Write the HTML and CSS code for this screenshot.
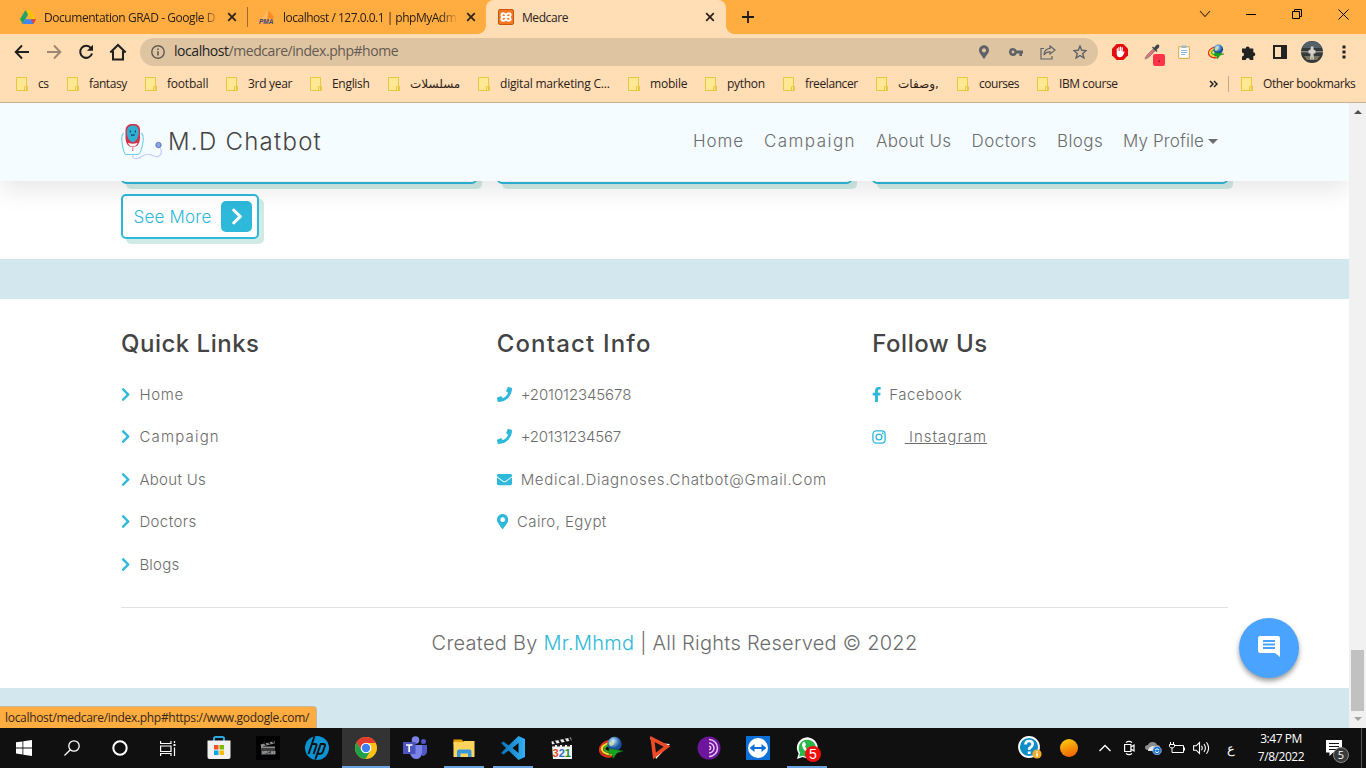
FILE: index.html
```html
<!DOCTYPE html>
<html lang="en">
<head>
<meta charset="utf-8">
<title>Medcare</title>
<link rel="stylesheet" href="styles.css">
</head>
<body>
<svg class="defs" width="0" height="0">
  <defs>
    <symbol id="chev" viewBox="0 0 320 512"><path d="M285.476 272.971L91.132 467.314c-9.373 9.373-24.569 9.373-33.941 0l-22.667-22.667c-9.357-9.357-9.375-24.522-.04-33.901L188.505 256 34.484 101.255c-9.335-9.379-9.317-24.544.04-33.901l22.667-22.667c9.373-9.373 24.569-9.373 33.941 0L285.475 239.03c9.373 9.372 9.373 24.568.001 33.941z"/></symbol>
    <symbol id="phone" viewBox="0 0 512 512"><path d="M493.4 24.6l-104-24c-11.3-2.6-22.9 3.3-27.5 13.9l-48 112c-4.2 9.8-1.4 21.3 6.9 28l60.6 49.6c-36 76.7-98.9 140.5-177.2 177.2l-49.6-60.6c-6.8-8.3-18.2-11.1-28-6.9l-112 48C3.9 366.5-2 378.1.6 389.4l24 104C27.1 504.2 36.7 512 48 512c256.1 0 464-207.5 464-464 0-11.2-7.7-20.9-18.6-23.4z"/></symbol>
    <symbol id="mail" viewBox="0 0 512 512"><path d="M502.3 190.8c3.9-3.1 9.7-.2 9.7 4.7V400c0 26.5-21.5 48-48 48H48c-26.5 0-48-21.5-48-48V195.6c0-5 5.7-7.8 9.7-4.7 22.4 17.4 52.1 39.5 154.1 113.6 21.1 15.4 56.7 47.8 92.2 47.6 35.7.3 72-32.8 92.3-47.6 102-74.1 131.6-96.3 154-113.7zM256 320c23.2.4 56.6-29.2 73.4-41.4 132.7-96.3 142.8-104.7 173.4-128.7 5.8-4.5 9.2-11.5 9.2-18.9v-19c0-26.5-21.5-48-48-48H48c-26.5 0-48 21.5-48 48v19c0 7.4 3.4 14.3 9.2 18.9 30.6 23.9 40.7 32.4 173.4 128.7 16.8 12.2 50.2 41.8 73.4 41.4z"/></symbol>
    <symbol id="pin" viewBox="0 0 384 512"><path d="M172.268 501.67C26.97 291.031 0 269.413 0 192 0 85.961 85.961 0 192 0s192 85.961 192 192c0 77.413-26.97 99.031-172.268 309.67-9.535 13.774-29.93 13.773-39.464 0zM192 272c44.183 0 80-35.817 80-80s-35.817-80-80-80-80 35.817-80 80 35.817 80 80 80z"/></symbol>
    <symbol id="fb" viewBox="0 0 320 512"><path d="M279.14 288l14.22-92.66h-88.91v-60.13c0-25.35 12.42-50.06 52.24-50.06h40.42V6.26S260.43 0 225.36 0c-73.22 0-121.08 44.38-121.08 124.72v70.62H22.89V288h81.39v224h100.17V288z"/></symbol>
    <symbol id="insta" viewBox="0 0 14 14"><g fill="none" stroke="currentColor" stroke-width="1.3"><rect x=".9" y=".9" width="12.2" height="12.2" rx="3.4"/><circle cx="7" cy="7" r="2.9"/></g><circle cx="10.7" cy="3.4" r=".9"/></symbol>
    <symbol id="folder" viewBox="0 0 12 14"><path d="M.5.5h10v9h1v4H.5z" fill="#ffe893" stroke="#e8c63f"/><path d="M8.5 13.5V10q0-.5.5-.5h1.5v4" fill="none" stroke="#e8c63f"/></symbol>
    <symbol id="x" viewBox="0 0 10 10"><path d="M1.2 1.2l7.6 7.600M8.8 1.2L1.2 8.8" fill="none" stroke="#2b2118" stroke-width="1.7"/></symbol>
    <linearGradient id="vs" x1="0" x2="1"><stop offset="0" stop-color="#0a72b8"/><stop offset="1" stop-color="#33b1f3"/></linearGradient>
    <linearGradient id="sun" x1="0" y1="0" x2="0.3" y2="1"><stop offset="0" stop-color="#ffd20a"/><stop offset="1" stop-color="#f06a05"/></linearGradient>
    <radialGradient id="globe" cx=".4" cy=".3"><stop offset="0" stop-color="#e8f4fb"/><stop offset=".45" stop-color="#6aa9d8"/><stop offset="1" stop-color="#1c4f9c"/></radialGradient>
    <symbol id="idm" viewBox="0 0 24 24"><path d="M12 4.500C4 5.500 0 11 1 15c1 4 7 7 12 5" fill="none" stroke="#e2321e" stroke-width="2"/><path d="M12 6.500C6 7.500 2 11 3 14c1 3 6 5 11 4" fill="none" stroke="#ffd52a" stroke-width="2.2"/><path d="M12 8.500C8 9.500 4.500 11 5.500 13.500c1 2 5 3 8 2.500" fill="none" stroke="#3fae2a" stroke-width="2"/><circle cx="15.500" cy="8" r="7.200" fill="url(#globe)"/><path d="M10 7c2-3 5-2 5 0s-2 3-4 3z" fill="#cfd9a8"/><path d="M10 12.500l14 2.500-6 2-4 5.500-1-5-3 1z" fill="#18a51f" stroke="#0b6b12" stroke-width=".5"/></symbol>
  </defs>
</svg>

<div class="tabstrip">
  <div class="tab tab-a">
    <svg width="16" height="14" viewBox="0 0 16 14"><path d="M5.5 0h5L16 9.3h-5z" fill="#ffc107"/><path d="M5.5 0L8 4.4 2.7 14 0 9.3z" fill="#1fa463"/><path d="M5.300 9.300H16L13.3 14H2.7z" fill="#4285f4"/><path d="M16 9.3L13.300 14 10.7 9.3z" fill="#ea4335"/></svg>
    <span class="tab-title fade">Documentation GRAD - Google D</span>
    <svg width="10" height="10"><use href="#x"/></svg>
  </div>
  <div class="tab tab-b">
    <svg width="17" height="16" viewBox="0 0 17 16"><path d="M2 9.500Q6 7 8 1q2 5 0 8.500z" fill="#ffb968"/><path d="M8 9.500Q10 6 9 2q5 3 6 7.500z" fill="#ff8a1c"/><text x="0" y="15.2" class="pma">PMA</text></svg>
    <span class="tab-title fade">localhost / 127.0.0.1 | phpMyAdm</span>
    <svg width="10" height="10"><use href="#x"/></svg>
  </div>
  <div class="tab tab-c">
    <svg width="16" height="16" viewBox="0 0 16 16"><rect x=".5" y=".5" width="15" height="15" rx="1.5" fill="#f37623" stroke="#c9560c"/><path d="M5.200 4.200Q7 4.200 8 6.200 9 4.200 10.800 4.200 12.800 4.200 12.600 6.200 12.300 7.300 11 8q1.500.700 1.600 2 0 1.800-1.800 1.800Q9 11.800 8 10q-1 1.800-2.800 1.800-1.800 0-1.800-1.800 0-1.300 1.600-2-1.500-.700-1.600-1.800.2-2 1.800-2zM6 8h4" fill="none" stroke="#fff" stroke-width="2"/></svg>
    <span class="tab-title">Medcare</span>
    <svg width="10" height="10"><use href="#x"/></svg>
  </div>
  <svg class="plus" width="12" height="12" viewBox="0 0 12 12"><path d="M6 0v12M0 6h12" stroke="#1f1a14" stroke-width="1.8"/></svg>
  <div class="winbtns">
    <svg width="12" height="8" viewBox="0 0 12 8"><path d="M1 1l5 5.500L11 1" fill="none" stroke="#3a2a14" stroke-width="1.1"/></svg>
    <svg width="10" height="10" viewBox="0 0 10 10"><path d="M0 5.500h10" stroke="#000"/></svg>
    <svg width="10" height="10" viewBox="0 0 10 10"><path d="M.5 2.500h7v7h-7zM2.500 2.500v-2h7v7h-2" fill="none" stroke="#000"/></svg>
    <svg width="11" height="11" viewBox="0 0 11 11"><path d="M.5.5l10 10M10.5.5l-10 10" stroke="#000"/></svg>
  </div>
</div>

<div class="toolbar">
  <svg width="16" height="16" viewBox="0 0 16 16"><path d="M15 8H2M8 1.500L1.700 8 8 14.500" fill="none" stroke="#1f1f1f" stroke-width="1.9"/></svg>
  <svg width="16" height="16" viewBox="0 0 16 16"><path d="M1 8h13M8 1.500L14.300 8 8 14.500" fill="none" stroke="#9b8772" stroke-width="1.9"/></svg>
  <svg width="16" height="16" viewBox="0 0 16 16"><path d="M13 4.200A6 6 0 1 0 14 9.500" fill="none" stroke="#1f1f1f" stroke-width="2"/><path d="M15 .8v6H9z" fill="#1f1f1f"/></svg>
  <svg width="18" height="18" viewBox="0 0 18 18"><path d="M1.300 9.500L9 2l7.700 7.500M4 8v8.500h10V8" fill="none" stroke="#1f1f1f" stroke-width="2"/></svg>
  <div class="omnibox">
    <svg width="14" height="14" viewBox="0 0 14 14"><circle cx="7" cy="7" r="6.200" fill="none" stroke="#5f5a54" stroke-width="1.4"/><path d="M7 6.200v4.300M7 3.400v1.600" stroke="#5f5a54" stroke-width="1.6"/></svg>
    <span class="url"><b>localhost</b>/medcare/index.php#home</span>
    <svg class="loc" width="10" height="14"><use href="#pin"/></svg>
    <svg width="14" height="8" viewBox="0 0 14 8"><path d="M4 0a4 4 0 0 1 3.700 2.600H14v2.800h-1V8h-2.600V5.400H7.700A4 4 0 1 1 4 0zM4 2.600a1.400 1.400 0 1 0 0 2.800 1.400 1.400 0 0 0 0-2.800z" fill="#5f6368" fill-rule="evenodd"/></svg>
    <svg width="16" height="15" viewBox="0 0 16 15"><path d="M4 3.500H1v10.500h11v-3" fill="none" stroke="#5f6368" stroke-width="1.2"/><path d="M10 1l5 4-5 4V6.800Q6 6.500 4 10 4.200 4 10 3.400z" fill="none" stroke="#5f6368" stroke-width="1.2"/></svg>
    <svg width="14" height="14" viewBox="0 0 14 14"><path d="M7 1l1.700 4.300 4.500.3-3.500 2.900 1.200 4.500L7 10.500 3.100 13l1.200-4.500L.8 5.600l4.500-.3z" fill="none" stroke="#5f6368" stroke-width="1.4"/></svg>
  </div>
  <div class="exts">
    <svg width="16" height="16" viewBox="0 0 16 16"><path d="M4.700 0h6.600L16 4.700v6.600L11.300 16H4.700L0 11.300V4.700z" fill="#e40d0d"/><path d="M4.700 8V4.600q.7-.8 1.200 0V7h.4V3.300q.6-.8 1.200 0V7H8V2.900q.6-.8 1.200 0V7h.4V3.600q.6-.8 1.200 0v5l.8-1.200q.9-.4 1 .3L11 11.500Q9.900 13.200 8 13.200 4.700 13 4.700 9.500z" fill="#fff"/></svg>
    <span class="picker"><svg width="16" height="16" viewBox="0 0 16 16"><path d="M1 15l1.500-3.500L9 5l2 2-6.500 6.500z" fill="#e0707c" stroke="#9c8583"/><path d="M8 3.500L12.500 8l1-1L12.400 6 15 3.500Q16 1 14.500.5T12 1.500L10 3.800 9 2.500z" fill="#40444c"/></svg><i>.</i></span>
    <svg width="12" height="14" viewBox="0 0 12 14"><rect x=".6" y="1.600" width="10.800" height="11.800" rx="1" fill="#fff" stroke="#e3b155" stroke-width="1.2"/><path d="M3.500.5h5v2.500h-5z" fill="#9fb9c9"/><path d="M3 5.500h6M3 7.500h6M3 9.500h4" stroke="#86b3da"/></svg>
    <svg width="16" height="16"><use href="#idm"/></svg>
    <svg width="15" height="15" viewBox="0 0 15 15"><path d="M1 3.500h3.700a2 2 0 1 1 4 0H12.300v3.700a2 2 0 1 1 0 4V15H8.800a2 2 0 0 0-4 0H1v-3.600a2 2 0 0 0 0-4z" fill="#222"/></svg>
    <svg width="14" height="14" viewBox="0 0 14 14"><path d="M0 0h14v14H0zM2 2v10h6V2z" fill="#222" fill-rule="evenodd"/></svg>
    <svg width="22" height="22" viewBox="0 0 22 22"><circle cx="11" cy="11" r="11" fill="#34393c"/><path d="M1 7Q3 2 8 .5h6Q19 2 21 7z" fill="#53616b"/><path d="M0 10h22v1.500H0z" fill="#87867a"/><path d="M3 15h16l-3 4H6z" fill="#7d7460"/><path d="M10 5.500h2.500v3l2 1v3h-2l.5 6h-1.500l-.5-5-.5 5H9l.5-6h-2v-3l2-1z" fill="#d9d2cb"/></svg>
    <svg width="4" height="14" viewBox="0 0 4 14"><path d="M.5.5h3v3h-3zM.5 5.500h3v3h-3zM.5 10.500h3v3h-3z" fill="#222"/></svg>
  </div>
</div>

<div class="bookmarks">
  <span class="bm"><svg width="12" height="14"><use href="#folder"/></svg><span class="m5">cs</span></span>
  <span class="bm"><svg width="12" height="14"><use href="#folder"/></svg><span class="m4">fantasy</span></span>
  <span class="bm"><svg width="12" height="14"><use href="#folder"/></svg><span class="m2">football</span></span>
  <span class="bm"><svg width="12" height="14"><use href="#folder"/></svg><span class="m3">3rd year</span></span>
  <span class="bm"><svg width="12" height="14"><use href="#folder"/></svg><span class="m3">English</span></span>
  <span class="bm"><svg width="12" height="14"><use href="#folder"/></svg><span class="ar">مسلسلات</span></span>
  <span class="bm"><svg width="12" height="14"><use href="#folder"/></svg><span class="m2">digital marketing C...</span></span>
  <span class="bm"><svg width="12" height="14"><use href="#folder"/></svg><span class="m2">mobile</span></span>
  <span class="bm"><svg width="12" height="14"><use href="#folder"/></svg><span class="m3">python</span></span>
  <span class="bm"><svg width="12" height="14"><use href="#folder"/></svg><span class="m4">freelancer</span></span>
  <span class="bm"><svg width="12" height="14"><use href="#folder"/></svg><span class="ar">وصفات,</span></span>
  <span class="bm"><svg width="12" height="14"><use href="#folder"/></svg><span class="m5">courses</span></span>
  <span class="bm"><svg width="12" height="14"><use href="#folder"/></svg><span class="m4">IBM course</span></span>
  <svg width="9" height="8" viewBox="0 0 9 8"><path d="M1 1l3 3-3 3M5 1l3 3-3 3" fill="none" stroke="#222" stroke-width="1.5"/></svg>
  <span class="bm-sep"></span>
  <span class="bm"><svg width="12" height="14"><use href="#folder"/></svg><span class="m4">Other bookmarks</span></span>
</div>

<div class="view">
  <div class="page">
    <header class="header">
      <a class="brand">
        <svg width="41" height="36" viewBox="0 0 41 36"><path d="M2.500 9Q0 12 1 18q1.500 12 4 12.500h12q3-.5 5-12.500 1-6-1.500-9" fill="none" stroke="#74cfe2" stroke-width="1.200"/><path d="M12 31q-1 4 4 3.500 3-.3 6-2.700 4-2.500 8-1 8 4.500 10-1 1-4-1-6" fill="none" stroke="#c3cdf6" stroke-width="1.200"/><path d="M11 0h2q5.500 0 6 5.500v9q-.5 8.500-7.200 8.500T4.500 14.500v-9Q5.500 0 11 0z" fill="#d5304a"/><path d="M11 1.500h2q4.500.5 4.800 6 .2 8.500-6 11-6.200-2.500-6-11 .3-5.500 5.200-6z" fill="#2fafd2"/><path d="M7 18.800q4.800 2 9.600 0-1 3.700-4.800 3.700T7 18.800z" fill="#fff"/><path d="M11.800 23v4" stroke="#ef9b9b" stroke-width="1.500"/><path d="M9.300 6.500v2M14.400 6.500v2M10 10.500q1.800 1.500 3.600 0" stroke="#173a59" stroke-width="1.100" fill="none"/><circle cx="37.500" cy="21" r="2.700" fill="#86a7e8" stroke="#56659d" stroke-width=".8"/></svg>
        <span>M.D Chatbot</span>
      </a>
      <nav class="nav">
        <a class="w9">Home</a><a class="w14">Campaign</a><a class="w3">About Us</a><a class="w5">Doctors</a><a class="w4">Blogs</a><a class="w1">My Profile<i class="caret"></i></a>
      </nav>
    </header>
    <section class="blog">
      <div class="cards"><div class="card"></div><div class="card"></div><div class="card"></div></div>
      <a class="more"><span class="w2">See More</span><i><svg width="12" height="19"><use href="#chev"/></svg></i></a>
    </section>
    <section class="footer">
      <div class="cols">
        <div class="col">
          <h3 class="w5">Quick Links</h3>
          <a><svg width="9.4" height="15"><use href="#chev"/></svg><span class="w7">Home</span></a>
          <a><svg width="9.4" height="15"><use href="#chev"/></svg><span class="w12">Campaign</span></a>
          <a><svg width="9.4" height="15"><use href="#chev"/></svg><span class="w3">About Us</span></a>
          <a><svg width="9.4" height="15"><use href="#chev"/></svg><span class="w4">Doctors</span></a>
          <a><svg width="9.4" height="15"><use href="#chev"/></svg><span class="w2">Blogs</span></a>
        </div>
        <div class="col">
          <h3 class="w12">Contact Info</h3>
          <a><svg width="15" height="15"><use href="#phone"/></svg><span class="m1">+201012345678</span></a>
          <a><svg width="15" height="15"><use href="#phone"/></svg><span class="m2">+20131234567</span></a>
          <a><svg width="15" height="15"><use href="#mail"/></svg><span class="w7">Medical.Diagnoses.Chatbot@Gmail.Com</span></a>
          <a><svg width="11.3" height="15"><use href="#pin"/></svg><span class="w4">Cairo, Egypt</span></a>
        </div>
        <div class="col">
          <h3 class="w5">Follow Us</h3>
          <a class="fbl"><svg width="9.4" height="15"><use href="#fb"/></svg><span class="w6">Facebook</span></a>
          <a class="ig"><svg width="14" height="14"><use href="#insta"/></svg><u>&nbsp;<span class="w10">Instagram</span></u></a>
        </div>
      </div>
      <div class="credit">Created By <em>Mr.Mhmd</em> | All Rights Reserved © 2022</div>
    </section>
    <div class="chat"><svg width="22" height="22" viewBox="0 0 22 22"><path d="M2 0h18q2 0 2 2v19l-5-4H2q-2 0-2-2V2Q0 0 2 0zM5 4v2h12V4zM5 7.500v2h12v-2zM5 11v2h12v-2z" fill="#fff" fill-rule="evenodd"/></svg></div>
    <div class="status">localhost/medcare/index.php#https://www.godogle.com/</div>
  </div>
  <div class="scroll"><i class="up"></i><i class="thumb"></i><i class="down"></i></div>
</div>

<div class="taskbar">
  <div class="sys">
    <svg width="16" height="16" viewBox="0 0 16 16"><path d="M0 2.300l6.500-.9v6.100H0zM7.300 1.300L16 0v7.500H7.300zM0 8.400h6.500v6.100L0 13.600zM7.300 8.400H16V16l-8.700-1.300z" fill="#fff"/></svg>
    <svg width="16" height="16" viewBox="0 0 16 16"><circle cx="10" cy="6" r="5.200" fill="none" stroke="#fff" stroke-width="1.3"/><path d="M6.300 9.700L.5 15.500" stroke="#fff" stroke-width="1.3"/></svg>
    <svg width="16" height="16" viewBox="0 0 16 16"><circle cx="8" cy="8" r="6.700" fill="none" stroke="#fff" stroke-width="2"/></svg>
    <svg width="16" height="15" viewBox="0 0 16 15"><path d="M.6 0v2.500h10.400V0M.6 5h10.400v5.500H.6zM.6 15v-2.500h10.400V15M14.500 0v2M14.500 6.500V15" fill="none" stroke="#fff" stroke-width="1.2"/><path d="M13.500 3h2v2h-2z" fill="#fff"/></svg>
  </div>
  <div class="apps">
    <div><svg width="24" height="24" viewBox="0 0 24 24"><path d="M7 5V2.500Q7 1 8.500 1h7Q17 1 17 2.500V5" fill="none" stroke="#2aa8e0" stroke-width="2"/><path d="M.5 4.500h23V21q0 2-2 2h-19q-2 0-2-2z" fill="#f1f1f1"/><path d="M7 9h4.500v4.500H7z" fill="#f25022"/><path d="M12.500 9H17v4.500h-4.500z" fill="#7fba00"/><path d="M7 14.500h4.500V19H7z" fill="#00a4ef"/><path d="M12.500 14.500H17V19h-4.500z" fill="#ffb900"/></svg></div>
    <div><svg width="24" height="24" viewBox="0 0 24 24"><path d="M0 0h24v24H0z" fill="#000"/><path d="M5 12h14v7H5z" fill="#3c3c3c"/><path d="M4.500 8.500l14-3.500.6 2.300-14 3.500zM5 10.500h14V12H5z" fill="#8e8e8e"/><path d="M8 6l2 3M12 5.500l2 2.500M16 4.500l2 2.500" stroke="#111" stroke-width="1.5"/><text x="6" y="17.8" class="mpc">MPC-BE</text></svg></div>
    <div><svg width="24" height="24" viewBox="0 0 24 24"><circle cx="12" cy="12" r="12" fill="#0b93d2"/><path d="M9.500.3L3.500 18M7 8h3q2 0 1.400 1.700L8.600 18M15.700 8L10.300 23.500M15 8h3.500q2 0 1.400 1.700l-2 6q-.7 2-2.400 2H13" fill="none" stroke="#111" stroke-width="1.9"/></svg></div>
    <div class="active"><svg width="24" height="24" viewBox="0 0 24 24"><circle cx="12" cy="12" r="11" fill="#fbc116"/><path d="M12 7h9.800A11 11 0 0 0 2.500 6.500L7.700 14.500z" fill="#e33b2e"/><path d="M2.500 6.500A11 11 0 0 0 11.500 23l5-8.500H7.700z" fill="#1fa04a"/><circle cx="12" cy="12" r="5.300" fill="#fff"/><circle cx="12" cy="12" r="4.200" fill="#3c7ff0"/></svg></div>
    <div><svg width="24" height="24" viewBox="0 0 24 24"><circle cx="20.500" cy="5.500" r="2.500" fill="#5059c9"/><path d="M16 9h8v7q-1 4-5 4z" fill="#5059c9"/><circle cx="12.500" cy="4" r="3.800" fill="#7b83eb"/><path d="M8 9h11v8q-1 6-6 6-5-.5-6-6z" fill="#7b83eb"/><path d="M0 6h12.500v12H0z" fill="#4b53bc"/><path d="M3 9h6.500M6.200 9v7" stroke="#fff" stroke-width="1.7"/></svg></div>
    <div class="open"><svg width="22" height="20" viewBox="0 0 22 20"><path d="M.5 1.500h8l2 2v3h-10z" fill="#e8a100"/><path d="M.5 4L10 4l1-1h10.500v16H.5z" fill="#ffd45c"/><path d="M4 19v-5.500q0-2 2-2h10.500q2 0 2 2V19h-3.500v-3.500h-7.500V19z" fill="#3a96dd"/></svg></div>
    <div class="open"><svg width="24" height="24" viewBox="0 0 24 24"><path d="M17.500 0L24 3v18l-6.500 3L7.500 14.500 2.500 18.500 0 17l5-5-5-5 2.500-1.500 5 4zM17.500 7L11.500 12l6 5z" fill="url(#vs)" fill-rule="evenodd"/></svg></div>
    <div><svg width="22" height="24" viewBox="0 0 22 24"><path d="M1 9h20v14H2z" fill="#f4f4f4"/><path d="M.5 5.500L20 1.500l.5 3L1 8.500z" fill="#eee"/><path d="M3 5l2 3M8 4l2 3M13 3l2 3M18 2l1.500 3" stroke="#111" stroke-width="2"/><path d="M1 9.500h20" stroke="#222" stroke-dasharray="3 2" stroke-width="2"/><text x="1.500" y="20.500" class="clap"><tspan fill="#d84d1b">3</tspan><tspan fill="#2b6fc4">2</tspan><tspan fill="#258b2e">1</tspan></text></svg></div>
    <div><svg width="24" height="24"><use href="#idm"/></svg></div>
    <div><svg width="22" height="24" viewBox="0 0 22 24"><path d="M1 1l6 6 14 1-14 15z" fill="#fff"/><path d="M3.500 3L18 10.500 5.500 20z" fill="#151515" stroke="#ee4a25" stroke-width="3.6"/></svg></div>
    <div><svg width="24" height="24" viewBox="0 0 24 24"><circle cx="12" cy="12" r="11.500" fill="#6d169b"/><path d="M12 3.500a8.500 8.500 0 0 1 0 17M12 7a5 5 0 0 1 0 10M12 10.300a1.700 1.700 0 0 1 0 3.400" fill="none" stroke="#e6c6f5" stroke-width="1.5"/></svg></div>
    <div><svg width="24" height="24" viewBox="0 0 24 24"><path d="M0 0h24v24H0z" fill="#0d6fd8"/><circle cx="12" cy="12" r="10" fill="#fff"/><path d="M3.500 12l5-4v3h7V8l5 4-5 4v-3h-7v3z" fill="#0d6fd8"/></svg></div>
    <div class="open wa"><svg width="24" height="24" viewBox="0 0 24 24"><path d="M2 23l1.600-5.500A10.400 10.400 0 1 1 7.500 21z" fill="#fff"/><path d="M4 20.700l1-3.900a8.600 8.600 0 1 1 3 2.900z" fill="#2ab74a"/><path d="M8.500 6l1.500.3 1 2.700-1 1.500q1 2.500 4 3.800l1.500-1.600 2.500 1.200q0 3-3 3Q8 16 7 9q0-2 1.500-3z" fill="#fff"/></svg><b>5</b></div>
  </div>
  <div class="tray">
    <svg width="24" height="24" viewBox="0 0 24 24"><circle cx="11" cy="11" r="10" fill="#0f8fc9" stroke="#fff" stroke-width="1.8"/><path d="M7.500 8.500Q7.500 5 11 5t3.700 3q0 2-3.500 4.500v1.500" fill="none" stroke="#fff" stroke-width="2.6"/><path d="M9.800 15.500h2.800v2.500H9.800z" fill="#fff"/><circle cx="19" cy="18" r="4.600" fill="#f3ab2b"/><path d="M19 15.200v1.300M19 17.300v3.500" stroke="#fff" stroke-width="1.4"/></svg>
    <svg width="18" height="18" viewBox="0 0 18 18"><circle cx="9" cy="9" r="9" fill="url(#sun)"/></svg>
    <svg width="12" height="8" viewBox="0 0 12 8"><path d="M.5 7L6 1.500 11.500 7" fill="none" stroke="#fff" stroke-width="1.3"/></svg>
    <svg width="12" height="16" viewBox="0 0 12 16"><path d="M1.600 4.500h6.300v7H1.600zM8 7l3-2v6L8 9M3 2.500Q6 .2 9 2.500M3 13.500q3 2.300 6 0" fill="none" stroke="#fff" stroke-width="1.2"/></svg>
    <svg width="17" height="14" viewBox="0 0 17 14"><path d="M3 9Q0 9 0 6.500T3 4Q4 1 7.500 1T12 4q3 0 3 3v2z" fill="#8c8c8c"/><path d="M3 10q0-4 5-5l5 2v3z" fill="#e8e8e8"/><circle cx="12" cy="9.500" r="4.300" fill="#1c74d0" stroke="#dceaf8" stroke-width=".6"/><path d="M10 9q2-2.500 4 0M14 10.500q-2 2.500-4 0" stroke="#fff" fill="none"/></svg>
    <svg width="16" height="12" viewBox="0 0 16 12"><path d="M5 3.500h9.500v7H4M15.500 5.500v3M1.500 0v2M4.500 0v2M.5 2.500h5v2q-.5 1.500-2.500 1.500T.5 4.500zM3 6v4.500h2" fill="none" stroke="#fff"/></svg>
    <svg width="17" height="14" viewBox="0 0 17 14"><path d="M.6 4.800h2.600L6.500 1.500v11L3.200 9.200H.6z" fill="none" stroke="#fff" stroke-width="1.1"/><path d="M8.500 4.800q1.500 2.200 0 4.400M11 3q2.800 4 0 8M13.500 1.200q4.200 5.800 0 11.600" fill="none" stroke="#fff" stroke-width="1.1"/></svg>
    <span class="lang">ع</span>
    <span class="clock">3:47 PM<br>7/8/2022</span>
    <span class="note"><svg width="16" height="16" viewBox="0 0 16 16"><path d="M0 0h16v12.500H7L3.500 16v-3.500H0z" fill="#fff"/><path d="M3 3.500h10M3 6.500h10M3 9.500h7" stroke="#111" stroke-width="1.2"/></svg><b>5</b></span>
    <i class="peek"></i>
  </div>
</div>
</body>
</html>
```

FILE: styles.css
```css
* { box-sizing: border-box; }
body { margin: 0; width: 1366px; height: 768px; overflow: hidden; display: flex; flex-direction: column; font-family: "Open Sans", "Noto Sans", sans-serif; font-size: 12px; color: #2b2118; }
svg { display: block; flex: none; }
.defs { position: absolute; }
i { font-style: normal; }

/* letter-spacing steps: w = wider, m = tighter */
.m5 { letter-spacing: -.48px; }
.m4 { letter-spacing: -.41px; }
.m3 { letter-spacing: -.3px; }
.m2 { letter-spacing: -.2px; }
.m1 { letter-spacing: -.1px; }
.w1 { letter-spacing: .12px; }
.w2 { letter-spacing: .21px; }
.w3 { letter-spacing: .3px; }
.w4 { letter-spacing: .4px; }
.w5 { letter-spacing: .5px; }
.w6 { letter-spacing: .56px; }
.w7 { letter-spacing: .7px; }
.w9 { letter-spacing: .91px; }
.w10 { letter-spacing: 1px; }
.w12 { letter-spacing: 1.18px; }
.w14 { letter-spacing: 1.44px; }

.tabstrip { height: 34px; background: #ffac41; display: flex; align-items: center; flex: none; }
.tab { display: flex; align-items: center; height: 34px; position: relative; }
.tab-a { width: 248px; padding-left: 20px; }
.tab-a::after { content: ""; width: 1px; height: 20px; background: #9b6c30; margin-left: 10px; }
.tab-b { width: 238px; padding-left: 11px; }
.tab-c { width: 240px; padding-left: 12px; background: #ffddb5; border-radius: 8px 8px 0 0; letter-spacing: -.42px; }
.tab-c::before, .tab-c::after { content: ""; position: absolute; bottom: 0; width: 8px; height: 8px; }
.tab-c::before { left: -8px; background: radial-gradient(circle at 0 0, #ffac41 7.5px, #ffddb5 8px); }
.tab-c::after { right: -8px; background: radial-gradient(circle at 100% 0, #ffac41 7.5px, #ffddb5 8px); }
.tab-title { white-space: nowrap; margin-left: 8px; }
.tab-a .tab-title { width: 176px; margin-right: 7px; letter-spacing: -.45px; }
.tab-b .tab-title { width: 175px; margin-right: 8px; margin-left: 7px; letter-spacing: -.5px; }
.tab-c .tab-title { margin-right: auto; }
.tab-c > svg:last-child { margin-right: 11px; }
.fade { -webkit-mask-image: linear-gradient(90deg, #000 90%, transparent); mask-image: linear-gradient(90deg, #000 90%, transparent); }
.pma { font: italic bold 6.5px "Liberation Sans", sans-serif; fill: #3b4580; letter-spacing: 0; }
.plus { margin-left: 16px; }
.winbtns { margin-left: auto; display: grid; grid-template-columns: repeat(4, 46px); justify-items: center; align-items: center; height: 28px; margin-bottom: 6px; }

.toolbar { height: 36px; background: #ffddb5; flex: none; display: flex; align-items: center; padding-left: 14px; gap: 16px; }
.toolbar > svg:nth-child(4) { margin-left: -1px; }
.omnibox { width: 958px; height: 28px; border-radius: 14px; background: #dfc4a2; margin-left: -3px; padding: 0 11px; display: flex; align-items: center; }
.url { font-size: 14px; line-height: 20px; margin: -2px 0 0 9px; flex: 1; color: #625a50; letter-spacing: -.45px; }
.url b { font-weight: 400; color: #222; }
.loc { fill: #5f6368; margin-right: 20px; }
.omnibox svg:nth-of-type(3) { margin-right: 17px; }
.omnibox svg:nth-of-type(4) { margin-right: 17px; }
.exts { display: grid; grid-template-columns: repeat(8, 32px); justify-items: center; align-items: center; margin-left: -10px; }
.picker { position: relative; }
.picker i { position: absolute; left: 9px; top: 10px; width: 12px; height: 12px; border-radius: 2px; background: #fb3449; font-size: 10px; line-height: 9px; text-align: center; }

.bookmarks { height: 33px; background: #ffddb5; border-bottom: 1px solid #c9ae8f; flex: none; padding: 0 0 5px 16px; display: grid; grid-template-columns: 51px 78px 81px 84px 78px 90px 150px 77px 78px 93px 81px 80px 172px 19px 13px 1fr; align-items: center; }
.bm { display: flex; align-items: center; gap: 10px; white-space: nowrap; }
.ar { font-family: "DejaVu Sans", sans-serif; }
.bm-sep { width: 1px; height: 16px; background: #c5a888; }

.view { height: 625px; flex: none; display: flex; }
.page { width: 1349px; height: 625px; background: #fff; position: relative; overflow: hidden; font-family: Inter, sans-serif; font-weight: 300; color: #6c6c6c; }
.header { height: 78px; background: #f4fcff; box-shadow: 0 8px 24px rgba(0,0,0,.1); position: relative; z-index: 2; padding: 0 121px 2px; display: flex; align-items: center; justify-content: space-between; }
.brand { display: flex; align-items: center; gap: 6px; font-size: 24px; color: #444; letter-spacing: 1.26px; }
.brand svg { margin-top: 2px; }
.nav { display: grid; grid-template-columns: 71px 112px 95.5px 85.5px 66px 105px; font-size: 17px; }
.nav a { display: flex; align-items: center; white-space: nowrap; }
.caret { border: 5px solid transparent; border-top-color: #6c6c6c; border-bottom: 0; margin-left: 4px; }
.blog { display: flow-root; height: 78px; padding: 0 121px; background: #fff; }
.cards { display: grid; grid-template-columns: repeat(3, 1fr); gap: 20px; margin-top: -17px; }
.card { height: 20px; border: 2px solid #2eb8da; border-radius: 5px; box-shadow: 5px 5px 0 #d0ebe6; }
.more { margin-top: 10px; width: 138px; height: 45px; border: 2px solid #2eb8da; border-radius: 5px; box-shadow: 5px 5px 0 #d0ebe6; display: flex; align-items: center; justify-content: space-between; padding: 0 5px 0 10.5px; font-size: 17px; color: #2eb8da; background: #fff; white-space: nowrap; }
.more i { width: 31px; height: 31px; border-radius: 5px; background: #2eb8da; display: grid; place-items: center; }
.more svg { fill: #fff; }
.footer { border: solid #d3e7ee; border-width: 40px 0; height: 469px; padding: 24px 121px 0; }
.cols { display: grid; grid-template-columns: repeat(3, 1fr); gap: 20px; height: 285px; border-bottom: 1px solid #e2e2e2; }
h3 { margin: 0 0 9px; font-size: 24px; line-height: 41px; height: 41px; font-weight: 500; color: #444; }
.col a { display: flex; align-items: center; height: 42.5px; font-size: 15px; gap: 9px; }
.col svg { color: #2eb8da; fill: #2eb8da; }
.col .fbl { gap: 7.5px; }
.col .ig { gap: 18.5px; }
.credit { text-align: center; font-size: 20px; line-height: 30px; margin-top: 20px; letter-spacing: .27px; }
em { font-style: normal; color: #2eb8da; }
.chat { position: absolute; right: 50px; bottom: 50px; width: 60px; height: 60px; border-radius: 50%; background: #4aa4ff; box-shadow: 0 3px 5px rgba(0,0,0,.4); display: grid; place-items: center; padding-bottom: 3px; }
.status { position: absolute; left: 0; bottom: 0; width: 317px; height: 22px; background: #ffac41; border: solid #c9b79a; border-width: 1px 1px 0 0; border-top-right-radius: 4px; padding-left: 5px; line-height: 21px; font-family: "Open Sans", sans-serif; font-weight: 400; color: #33281a; white-space: nowrap; letter-spacing: -.31px; }
.scroll { width: 17px; background: #f1f1f1; display: flex; flex-direction: column; align-items: center; }
.up { border: 4px solid transparent; border-bottom-color: #505050; border-top: 0; margin-top: 7px; }
.thumb { width: 13px; height: 61px; background: #c1c1c1; margin-top: auto; }
.down { border: 4px solid transparent; border-top-color: #a3a3a3; border-bottom: 0; margin: 6px 0 7px; }

.taskbar { height: 40px; background: #101010; flex: none; display: flex; color: #fff; }
.sys { display: grid; grid-template-columns: repeat(4, 48px); place-items: center; margin-right: 2px; }
.apps { display: grid; grid-template-columns: repeat(13, 49px); height: 40px; }
.apps div { display: grid; place-items: center; position: relative; }
.apps .active { background: #333; border-bottom: 2px solid #6aa3e0; margin-left: 1px; }
.apps .active svg { margin-top: 2px; }
.open { box-shadow: inset 0 -2px #6aa3e0; margin: 0 4px 0 5px; }
.wa b { position: absolute; left: 18px; top: 18px; width: 16px; height: 16px; border-radius: 50%; background: #f00d0d; font: 14px/16px "Liberation Sans", sans-serif; text-align: center; }
.mpc { font: bold 3.5px "Liberation Sans", sans-serif; fill: #bbb; }
.clap { font: bold 11px "Liberation Sans", sans-serif; }
.tray { margin-left: auto; width: 348px; display: grid; grid-template-columns: 24px 54px 18px 30px 18px 30px 18px 42px 58px 48px 7px; align-items: center; justify-items: center; }
.lang { font-size: 13px; }
.clock { text-align: center; line-height: 18px; letter-spacing: -.45px; white-space: nowrap; }
.note { position: relative; }
.note b { position: absolute; left: 7px; top: 7px; width: 16px; height: 16px; border-radius: 50%; background: #3a3a3a; border: 1px solid #888; font: 11px/14px "Open Sans", sans-serif; text-align: center; }
.peek { width: 1px; height: 40px; background: #555; }
```
